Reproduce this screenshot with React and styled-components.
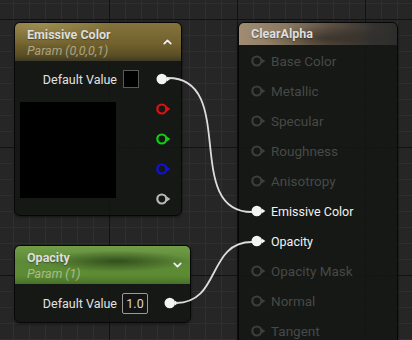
import React from "react";
import styled, { createGlobalStyle } from "styled-components";
import { ChevronUp, ChevronDown } from "lucide-react";

const GlobalStyle = createGlobalStyle`
  html, body {
    margin: 0;
    padding: 0;
  }
  body {
    font-family: Roboto, "Noto Sans", sans-serif;
    background-color: #262626;
    background-image:
      linear-gradient(#121212 1px, transparent 1px),
      linear-gradient(90deg, #121212 1px, transparent 1px),
      linear-gradient(#2f2f2f 1px, transparent 1px),
      linear-gradient(90deg, #2f2f2f 1px, transparent 1px);
    background-size: 128px 128px, 128px 128px, 16px 16px, 16px 16px;
    background-position: 0 19px, 109px 0, 0 3px, 13px 0;
  }
`;

const Canvas = styled.div`
  position: relative;
  width: 412px;
  height: 340px;
  overflow: hidden;
`;

const Wires = styled.svg`
  position: absolute;
  left: 0;
  top: 0;
  pointer-events: none;
  z-index: 2;
`;

const Node = styled.div`
  position: absolute;
  left: ${(p) => p.$x}px;
  top: ${(p) => p.$y}px;
  width: ${(p) => p.$w}px;
  height: ${(p) => (p.$h ? `${p.$h}px` : "auto")};
  box-sizing: border-box;
  border: 1px solid #070707;
  border-radius: 6px;
  background: rgba(19, 22, 19, 0.86);
  overflow: hidden;
  box-shadow: 0 1px 3px rgba(0, 0, 0, 0.5);
  z-index: 1;
`;

const Header = styled.div`
  position: relative;
  display: flex;
  flex-direction: column;
  justify-content: center;
  height: ${(p) => p.$h}px;
  box-sizing: border-box;
  padding: ${(p) => (p.$sub ? "3px 0 2px 12px" : "0 0 0 12px")};
  background: ${(p) => p.$bg};
`;

const Title = styled.div`
  font-size: 12.5px;
  font-weight: 700;
  line-height: 16px;
  color: #dedede;
  text-shadow: 0 1px 1px rgba(0, 0, 0, 0.35);
`;

const Sub = styled.div`
  font-size: 12.5px;
  font-style: italic;
  line-height: 16px;
  color: rgba(235, 230, 205, 0.55);
`;

const Toggle = styled.div`
  position: absolute;
  right: ${(p) => p.$r}px;
  top: 50%;
  transform: translateY(-50%);
  display: flex;
  color: #f0f0f0;
`;

const Body = styled.div`
  display: flex;
  flex-direction: column;
  padding: ${(p) => p.$pad};
`;

const Row = styled.div`
  display: flex;
  align-items: center;
  justify-content: flex-end;
  height: ${(p) => p.$h || 20}px;
  padding-right: ${(p) => p.$pr}px;
`;

const Label = styled.span`
  font-size: 12.5px;
  color: #e2e2e2;
  margin-right: ${(p) => p.$mr}px;
`;

const Swatch = styled.div`
  width: 14px;
  height: 16px;
  background: #000;
  border: 1px solid #5a5a5a;
`;

const ValueBox = styled.div`
  width: 24px;
  height: 19px;
  border: 1px solid #9a9a9a;
  border-radius: 2px;
  display: flex;
  align-items: center;
  justify-content: center;
  font-size: 12.5px;
  color: #d8d8d8;
  background: #141414;
`;

const PinSlot = styled.div`
  display: flex;
  margin-left: ${(p) => p.$ml || 0}px;
`;

const Preview = styled.div`
  display: flex;
  justify-content: space-between;
  margin-top: 13px;
  padding-right: 10px;
`;

const PreviewBox = styled.div`
  width: 96px;
  height: 96px;
  background: #000;
`;

const PinColumn = styled.div`
  display: flex;
  flex-direction: column;
  gap: 18px;
  padding-top: 1px;
`;

const InputList = styled.div`
  display: flex;
  flex-direction: column;
  padding: 1px 0 0 12px;
`;

const InputRow = styled.div`
  display: flex;
  align-items: center;
  height: 30px;
  gap: 5px;
  font-size: ${(p) => (p.$on ? 12.5 : 13.5)}px;
  color: ${(p) => (p.$on ? "#f2f2f2" : "#474947")};
`;

function Pin({ color, filled }) {
  return (
    <svg width="15" height="12" viewBox="0 0 15 12">
      <circle
        cx="5.8"
        cy="6"
        r={filled ? 5.3 : 4.5}
        fill={filled ? color : "none"}
        stroke={filled ? "none" : color}
        strokeWidth="2.2"
      />
      <polygon points="10.8,3.6 14.4,6 10.8,8.4" fill={color} />
    </svg>
  );
}

const inputs = [
  "Base Color",
  "Metallic",
  "Specular",
  "Roughness",
  "Anisotropy",
  "Emissive Color",
  "Opacity",
  "Opacity Mask",
  "Normal",
  "Tangent",
];

const goldHeader = `
  radial-gradient(ellipse 60% 90% at 15% 0%, rgba(255, 235, 160, 0.22), transparent 70%),
  linear-gradient(180deg, #84733c 0%, #71612d 55%, #5a4e26 85%, #3e3a25 100%)
`;

const greenHeader = `
  radial-gradient(ellipse 42% 28% at 58% 40%, rgba(20, 40, 10, 0.6), transparent 100%),
  linear-gradient(180deg, #729e48 0%, #5e8a38 40%, #5d8b33 78%, #46702a 100%)
`;

const tanHeader = `
  radial-gradient(ellipse 40% 60% at 55% 70%, rgba(20, 18, 14, 0.45), transparent 100%),
  linear-gradient(90deg, #a08c72 0%, #8a785f 30%, #5a4e42 60%, #353330 85%, #2c2d2b 100%)
`;

export default function App() {
  return (
    <>
      <GlobalStyle />
      <Canvas>
        <Wires width="412" height="340" viewBox="0 0 412 340">
          <path
            d="M168 78 C238 78 182 212 252 212"
            fill="none"
            stroke="#dcdcdc"
            strokeWidth="1.8"
          />
          <path
            d="M176 303 C221 303 207 242 252 242"
            fill="none"
            stroke="#dcdcdc"
            strokeWidth="1.8"
          />
        </Wires>

        <Node $x={14} $y={22} $w={168}>
          <Header $h={38} $sub $bg={goldHeader}>
            <Title>Emissive Color</Title>
            <Sub>Param (0,0,0,1)</Sub>
            <Toggle $r={7}>
              <ChevronUp size={13} strokeWidth={3.2} />
            </Toggle>
          </Header>
          <Body $pad="8px 0 10px 5px">
            <Row $pr={10}>
              <Label $mr={6}>Default Value</Label>
              <Swatch />
              <PinSlot $ml={17}>
                <Pin color="#f4f4f4" filled />
              </PinSlot>
            </Row>
            <Preview>
              <PreviewBox />
              <PinColumn>
                <Pin color="#e01010" />
                <Pin color="#10d010" />
                <Pin color="#1010e6" />
                <Pin color="#b8b8b8" />
              </PinColumn>
            </Preview>
          </Body>
        </Node>

        <Node $x={14} $y={245} $w={177}>
          <Header $h={38} $sub $bg={greenHeader}>
            <Title>Opacity</Title>
            <Sub>Param (1)</Sub>
            <Toggle $r={6}>
              <ChevronDown size={13} strokeWidth={3.2} />
            </Toggle>
          </Header>
          <Body $pad="8px 0 8px 5px">
            <Row $h={22} $pr={11}>
              <Label $mr={5}>Default Value</Label>
              <ValueBox>1.0</ValueBox>
              <PinSlot $ml={16}>
                <Pin color="#f4f4f4" filled />
              </PinSlot>
            </Row>
          </Body>
        </Node>

        <Node $x={238} $y={22} $w={160} $h={340}>
          <Header $h={22} $bg={tanHeader}>
            <Title>ClearAlpha</Title>
          </Header>
          <InputList>
            {inputs.map((name) => {
              const on = name === "Emissive Color" || name === "Opacity";
              return (
                <InputRow key={name} $on={on}>
                  <Pin color={on ? "#f4f4f4" : "#3c3e3c"} filled={on} />
                  <span>{name}</span>
                </InputRow>
              );
            })}
          </InputList>
        </Node>
      </Canvas>
    </>
  );
}
